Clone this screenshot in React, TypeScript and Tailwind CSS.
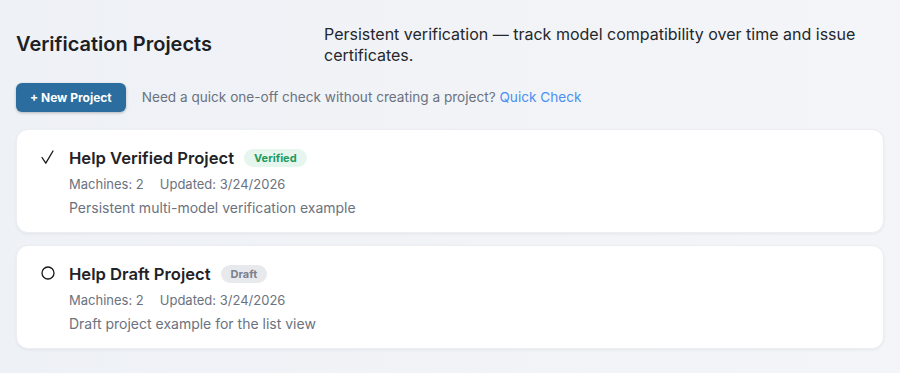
type Project = {
  name: string;
  status: "verified" | "draft";
  machines: number;
  updated: string;
  description: string;
};

const projects: Project[] = [
  {
    name: "Help Verified Project",
    status: "verified",
    machines: 2,
    updated: "3/24/2026",
    description: "Persistent multi-model verification example",
  },
  {
    name: "Help Draft Project",
    status: "draft",
    machines: 2,
    updated: "3/24/2026",
    description: "Draft project example for the list view",
  },
];

function StatusIcon({ verified }: { verified: boolean }) {
  return (
    <svg width="18" height="24" viewBox="0 0 18 24" fill="none" stroke="#15171a" strokeWidth="1.3">
      {verified ? (
        <path d="M3 11.5 L6.8 17.2 L14 5" strokeLinecap="round" strokeLinejoin="round" />
      ) : (
        <circle cx="9" cy="11" r="6" />
      )}
    </svg>
  );
}

function ProjectCard({ project }: { project: Project }) {
  const verified = project.status === "verified";
  return (
    <div className="bg-white rounded-xl border border-[#eceef2] shadow-[0_1px_3px_rgba(15,23,42,0.06)] pl-[22px] pr-6 pt-4 pb-[14px] flex gap-3">
      <StatusIcon verified={verified} />
      <div className="flex flex-col">
        <div className="flex items-center gap-[10px] h-6">
          <h3 className="text-[16.6px] font-semibold text-[#1f2328]">{project.name}</h3>
          {verified ? (
            <span className="rounded-full bg-[#e6f6ee] text-[#1f9a5b] text-[11px] font-bold px-[10px] leading-[18px]">
              Verified
            </span>
          ) : (
            <span className="rounded-full bg-[#e8e9ec] text-[#7b818c] text-[11px] font-bold px-[10px] leading-[18px]">
              Draft
            </span>
          )}
        </div>
        <div className="flex gap-4 text-[13px] text-[#6b7280] leading-5 mt-1">
          <span>Machines: {project.machines}</span>
          <span>Updated: {project.updated}</span>
        </div>
        <p className="text-[14px] text-[#6b7280] leading-5 mt-1">{project.description}</p>
      </div>
    </div>
  );
}

export default function App() {
  return (
    <section className="min-h-screen bg-gradient-to-r from-[#eef1f6] to-[#f4f5f8] px-4 pt-6 pb-6 font-['Inter',sans-serif]">
      <div className="flex justify-between items-center">
        <h1 className="text-[20px] font-semibold text-[#1c1f24] -mt-[2px]">Verification Projects</h1>
        <p className="max-w-[560px] text-[16px] leading-[21px] text-[#24272c]">
          Persistent verification — track model compatibility over time and issue certificates.
        </p>
      </div>
      <div className="flex items-center gap-4 mt-[17px]">
        <button className="bg-[#2a6d9e] text-white text-[12px] font-bold rounded-md px-[14px] h-[29px] shadow-[0_1px_3px_rgba(0,0,0,0.25)]">
          + New Project
        </button>
        <p className="text-[13.6px] text-[#6b7280]">
          Need a quick one-off check without creating a project?{" "}
          <a className="text-[#4b8ff2]" href="#">
            Quick Check
          </a>
        </p>
      </div>
      <div className="flex flex-col gap-3 mt-[17px]">
        {projects.map((p) => (
          <ProjectCard key={p.name} project={p} />
        ))}
      </div>
    </section>
  );
}
